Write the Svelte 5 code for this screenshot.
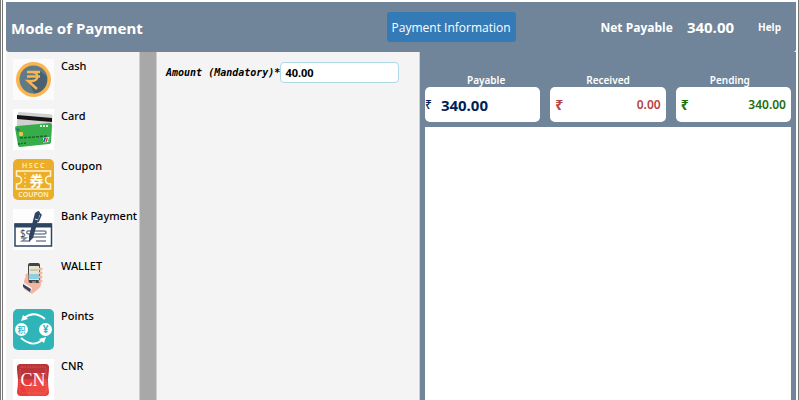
<script>
  const modes = ['Cash', 'Card', 'Coupon', 'Bank Payment', 'WALLET', 'Points', 'CNR'];
  let selected = $state('Cash');
  let amount = $state('40.00');
</script>

{#snippet icon(name)}
  <svg class="icon" viewBox="0 0 41 41" aria-hidden="true">
    {#if name === 'Cash'}
      <rect width="41" height="41" fill="#fbfbfb" />
      <circle cx="20.5" cy="20.5" r="17.5" fill="#fbb54e" />
      <circle cx="20.5" cy="20.5" r="14" fill="#617a89" />
      <path d="M27 12 33.500 17A14 14 0 0 1 21 34.500L15 21Z" fill="#4a6270" />
      <path d="M14 13h13M14 17.500h13M15 13h4c7 0 7 9 0 9h-4l9 8" fill="none" stroke="#fbb54e" stroke-width="2.400" />
    {:else if name === 'Card'}
      <rect width="41" height="41" fill="#fff" />
      <rect x="4" y="4" width="35" height="21" rx="2" fill="#d1d1d1" transform="rotate(4 21 14)" />
      <path d="m4 6 35 3v4L4 10z" fill="#171315" />
      <path d="m4 17 33-3q2 0 2 2l-1 17q0 2-2 2L7 38q-2 0-2-2L2 19q0-2 2-2z" fill="#36ad49" />
      <rect x="6" y="23" width="4" height="4" rx="1" fill="#f4bd48" />
      <path d="M27 17h2m1 0h2m1 0h2" stroke="#d5f2d8" stroke-width="2" />
      <path d="m7 29 28-2" stroke="#176c2b" stroke-width="1.500" stroke-dasharray="3 1" />
      <path d="m5 35 8-1" stroke="#176c2b" stroke-width="1.500" stroke-dasharray="2 1" />
      <path d="m3 20 4 1m-2-2v4" stroke="#37618d" />
      <path d="m30 29 7-1-1 5-6 .5z" fill="#fff" />
      <path d="m31 29 2-.2-1 4-2 .2z" fill="#215fae" />
      <path d="m33.500 29 1.500-.2-1 4-1.500.2z" fill="#dd3337" />
      <path d="m36 28.500 1-.1-1 4-1 .1z" fill="#18877a" />
    {:else if name === 'Coupon'}
      <rect width="41" height="41" rx="5" fill="#ecae29" />
      <text x="21" y="9" text-anchor="middle" font-size="7" font-weight="600" letter-spacing="1.5" fill="#fff4d0">HSCC</text>
      <path d="M3.500 12h34v5q-5 0-5 4t5 4v5h-34v-5q5 0 5-4t-5-4z" fill="none" stroke="#fff4d0" stroke-width="1.500" />
      <path d="M12 14v14" stroke="#fff4d0" stroke-dasharray="2 2" />
      <text x="23.500" y="26.500" text-anchor="middle" font-size="14" font-weight="700" class="cjk" fill="#fff">券</text>
      <text x="20.500" y="38" text-anchor="middle" font-size="7" font-weight="600" fill="#fff4d0">COUPON</text>
    {:else if name === 'Bank Payment'}
      <rect width="41" height="41" fill="#fdfdfd" />
      <rect x="2" y="15" width="36.500" height="22" fill="#fff" stroke="#2e4562" stroke-width="1.500" />
      <path d="M1.500 14.500h37v4h-37z" fill="#2e4562" />
      <text x="7" y="28" font-size="10" fill="#2e4562">$</text>
      <path d="M14 22h17q2 0 2 1.500T31 25H16q-3 0-2-3m4 6h15M8 29h5l-4 3h8m6 0h10" fill="none" stroke="#788697" stroke-width="1.500" />
      <path d="m22 4 3-2q2 0 2 3l-1 3-6 21-4 4 0-6z" fill="#2e4562" />
      <path d="m26 4 2 2-3 7" fill="none" stroke="#2e4562" stroke-width="1.500" />
      <path d="m22 10 3 1" stroke="#dce2e8" />
    {:else if name === 'WALLET'}
      <path d="m12 19 4-4 11-5 1 15q0 3-4 6l-5 4-8-5v-8z" fill="#f3b5a0" />
      <rect x="15" y="4" width="12" height="20" rx="2" fill="#424349" />
      <rect x="16" y="7" width="10" height="14" fill="#e8e4ce" />
      <path d="M17 11h8" stroke="#a5ae95" />
      <path d="M16 15h10v5H16z" fill="#8dcee0" />
      <path d="M19 23h4" stroke="#b9c6cd" />
      <path d="M27 10h1m-1 4h1m-1 4h1m-1 4h1" stroke="#f3b5a0" stroke-width="3" stroke-linecap="round" />
      <path d="M14 16v8l4 3" fill="none" stroke="#f3b5a0" stroke-width="3" stroke-linecap="round" />
      <path d="m11 24 8 5-1 3-8-5z" fill="#fff" />
      <path d="m10 25 8 5-1 3-7-5z" fill="#354263" />
    {:else if name === 'Points'}
      <rect width="41" height="41" rx="5" fill="#2fb4b8" />
      <path d="M32 10q-11-9-21-1M8 29q12 10 21 2" fill="none" stroke="#fff" stroke-width="1.800" />
      <path d="m8 12 2-6 5 4zM33 28l-2 6-5-4z" fill="#fff" />
      <circle cx="8.500" cy="20.500" r="6.500" fill="#fff" />
      <circle cx="32.500" cy="20.500" r="6.500" fill="#fff" />
      <text x="8.500" y="23.500" text-anchor="middle" font-size="8" class="cjk" fill="#2fb4b8">积</text>
      <text x="32.500" y="24" text-anchor="middle" font-size="10" font-weight="700" fill="#2fb4b8">¥</text>
    {:else}
      <rect width="41" height="41" fill="#fff" />
      <path d="M8 5h24q4 0 4 4-2 11 0 24 0 4-4 4H8q-4 0-4-4 2-12 0-24 0-4 4-4z" fill="#e93c38" />
      <path d="M8 5h24q4 0 4 4l-1 11H5L4 9q0-4 4-4z" fill="#ba3438" />
      <path d="m9 25 7 4 9-16 10 11v8q0 5-5 5H16z" fill="#ed4943" />
      <rect x="7" y="8" width="26" height="26" rx="2" fill="none" stroke="#ef7770" stroke-width=".6" stroke-dasharray="1.500 1" />
      <text x="20" y="26.500" text-anchor="middle" font-size="18" class="serif" fill="#fff">CN</text>
    {/if}
  </svg>
{/snippet}

<div class="page">
  <header>
    <h1>Mode of Payment</h1>
    <button class="info" type="button">Payment Information</button>
    <div class="net">
      <span>Net Payable</span>
      <strong>340.00</strong>
      <a href="#help">Help</a>
    </div>
  </header>
  <main>
    <nav aria-label="Payment modes">
      {#each modes as mode}
        <button type="button" aria-pressed={selected === mode} onclick={() => (selected = mode)}>
          {@render icon(mode)}
          <span>{mode}</span>
        </button>
      {/each}
    </nav>
    <div class="rail"></div>
    <form>
      <label for="amount">Amount (Mandatory)*</label>
      <input id="amount" type="text" inputmode="decimal" bind:value={amount} />
    </form>
    <section>
      <div class="totals">
        <div class="total payable">
          <h2>Payable</h2>
          <p><span>₹</span><b>340.00</b></p>
        </div>
        <div class="total received">
          <h2>Received</h2>
          <p><span>₹</span><b>0.00</b></p>
        </div>
        <div class="total pending">
          <h2>Pending</h2>
          <p><span>₹</span><b>340.00</b></p>
        </div>
      </div>
      <div class="entries"></div>
    </section>
  </main>
</div>

<style>
  :global(body) {
    background: #fff;
  }
  .page {
    box-sizing: border-box;
    display: flex;
    flex-direction: column;
    height: 100vh;
    padding: 2px 2px 0 3px;
    border-left: 3px double #777;
    border-right: 1px solid #777;
    font-family: "Noto Sans", "Open Sans", sans-serif;
    font-size: 12px;
    color: #000;
  }
  header {
    display: grid;
    grid-template-columns: 375fr auto 265fr;
    align-items: center;
    flex: none;
    height: 50px;
    padding: 0 15px 0 5px;
    box-sizing: border-box;
    border-radius: 0 0 3px 3px;
    background: #708599;
    color: #fff;
  }
  h1 {
    margin: 2px 0 0;
    font-size: 15px;
    line-height: 20px;
    font-weight: 700;
  }
  .info {
    height: 30px;
    padding: 0 5px;
    border: 0;
    border-radius: 3px;
    background: #347ab7;
    color: #fff;
    font: 12px "Open Sans", "Noto Sans", sans-serif;
  }
  .net {
    display: flex;
    align-items: center;
    justify-content: flex-end;
    gap: 14px;
    font-family: "Open Sans", "Noto Sans", sans-serif;
    font-weight: 700;
  }
  .net strong {
    font-size: 15px;
    font-weight: 700;
  }
  .net a {
    margin-left: 10px;
    color: inherit;
    font-size: 10px;
    text-decoration: none;
  }
  main {
    display: grid;
    grid-template-columns: 134px 16px minmax(0, 264fr) minmax(0, 376fr);
    grid-template-rows: minmax(min-content, 1fr);
    flex: 1;
    min-height: 0;
    overflow: hidden auto;
    scrollbar-width: none;
  }
  nav {
    box-sizing: border-box;
    border-right: 1px solid #d0d0d0;
    background: #f4f4f4;
  }
  nav button {
    display: flex;
    gap: 7px;
    width: 100%;
    height: 50px;
    padding: 7px 0 0 7px;
    border: 0;
    background: none;
    color: #000;
    font: 500 11px/14px "Noto Sans", sans-serif;
    text-align: left;
    white-space: nowrap;
  }
  .icon {
    flex: none;
    width: 41px;
    height: 41px;
    font-family: "Open Sans", "Noto Sans", sans-serif;
  }
  .cjk {
    font-family: "Noto Sans CJK SC", sans-serif;
  }
  .serif {
    font-family: "Liberation Serif", serif;
  }
  .rail {
    background: #a8a8a8;
  }
  form {
    display: flex;
    align-items: flex-start;
    box-sizing: border-box;
    padding: 10px 20px 0 9px;
    border-left: 1px solid #d0d0d0;
    border-right: 1px solid #d0d0d0;
    background: #f4f4f4;
  }
  label {
    flex: none;
    font: italic 700 10px/22px "DejaVu Sans Mono", monospace;
  }
  input {
    box-sizing: border-box;
    flex: 1;
    min-width: 0;
    height: 21px;
    padding: 0 4px;
    border: 1px solid #add8e6;
    border-radius: 4px;
    background: #fff;
    color: #000;
    font: 700 11px "Noto Sans", sans-serif;
  }
  section {
    display: flex;
    flex-direction: column;
    gap: 5px;
    padding: 21px 5px 0;
    background: #708599;
  }
  .totals {
    display: flex;
    gap: 10px;
  }
  .total {
    flex: 1;
  }
  h2 {
    margin: 0;
    color: #fff;
    font-size: 10px;
    line-height: 14px;
    font-weight: 600;
    text-align: center;
  }
  .payable h2 {
    padding-left: 7px;
  }
  .pending h2 {
    padding-right: 7px;
  }
  p {
    display: flex;
    align-items: center;
    justify-content: space-between;
    box-sizing: border-box;
    height: 35px;
    margin: 0;
    padding: 0 5px;
    border-radius: 5px;
    background: #fff;
  }
  p span {
    font-size: 14px;
    font-weight: 700;
  }
  p b {
    font-size: 12px;
    font-weight: 600;
  }
  .payable p {
    justify-content: flex-start;
    gap: 9px;
    padding: 0;
    color: #001f56;
  }
  .payable span {
    font-size: 12px;
    font-weight: 500;
  }
  .payable b {
    font-size: 15px;
    font-weight: 700;
  }
  .received p {
    color: #b84343;
  }
  .pending p {
    color: #23700d;
  }
  .entries {
    flex: 1;
    background: #fff;
  }
</style>
